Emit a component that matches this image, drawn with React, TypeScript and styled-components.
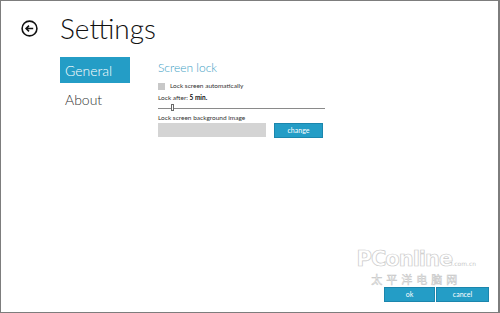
import * as React from "react";
import styled, { createGlobalStyle } from "styled-components";

const GlobalStyle = createGlobalStyle`
  html, body {
    margin: 0;
    padding: 0;
    background: #ffffff;
  }
  * {
    box-sizing: border-box;
  }
`;

const BLUE = "#249dc6";
const FONT = `Lato, "Open Sans", "Noto Sans", sans-serif`;

const App: React.FC = () => {
  const [auto, setAuto] = React.useState(false);
  const [minutes] = React.useState(5);

  return (
    <>
      <GlobalStyle />
      <Frame>
        <Header>
          <BackButton aria-label="Back">
            <svg width="17" height="17" viewBox="0 0 17 17" fill="none">
              <circle cx="8.5" cy="8.5" r="7.4" stroke="#111" strokeWidth="1.6" />
              <path d="M12.2 8.5H5.2M8 5.6L5.1 8.5L8 11.4" stroke="#111" strokeWidth="1.6" />
            </svg>
          </BackButton>
          <Title>Settings</Title>
        </Header>

        <Body>
          <Nav>
            <NavItem $active>General</NavItem>
            <NavItem>About</NavItem>
          </Nav>

          <Content>
            <SectionTitle>Screen lock</SectionTitle>
            <CheckRow onClick={() => setAuto(!auto)}>
              <CheckBox $checked={auto} />
              <SmallText>Lock screen automatically</SmallText>
            </CheckRow>
            <SmallText>
              Lock after: <strong>{minutes} min.</strong>
            </SmallText>
            <Slider>
              <Track />
              <Thumb style={{ left: `${minutes * 2.6}px` }} />
            </Slider>
            <SmallText>Lock screen background image</SmallText>
            <ImageRow>
              <ImageField />
              <Button $width={49}>change</Button>
            </ImageRow>
          </Content>
        </Body>

        <Footer>
          <Button $width={51}>ok</Button>
          <Button $width={53}>cancel</Button>
        </Footer>

        <Watermark aria-hidden>
          <WatermarkLogo>
            PConline<small>.com.cn</small>
          </WatermarkLogo>
          <WatermarkCn>太平洋电脑网</WatermarkCn>
        </Watermark>
      </Frame>
    </>
  );
};

const Frame = styled.div`
  position: relative;
  width: 500px;
  height: 313px;
  border: 1px solid #7d7d7d;
  border-right-width: 2px;
  background: #ffffff;
  display: flex;
  flex-direction: column;
  font-family: ${FONT};
  color: #333;
  overflow: hidden;
`;

const Header = styled.div`
  display: flex;
  align-items: center;
  gap: 22px;
  padding: 8px 0 0 20px;
  height: 46px;
`;

const BackButton = styled.button`
  display: flex;
  padding: 0;
  border: none;
  background: none;
  cursor: pointer;
`;

const Title = styled.h1`
  margin: 0;
  font-size: 28px;
  font-weight: 300;
  color: #111;
  line-height: 1;
`;

const Body = styled.div`
  display: flex;
  gap: 28px;
  padding: 10px 0 0 59px;
`;

const Nav = styled.nav`
  width: 70px;
  display: flex;
  flex-direction: column;
`;

const NavItem = styled.div<{ $active?: boolean }>`
  height: 26px;
  margin-bottom: 3px;
  padding-left: 5px;
  display: flex;
  align-items: center;
  font-size: 14px;
  font-weight: 300;
  background: ${(p) => (p.$active ? BLUE : "transparent")};
  color: ${(p) => (p.$active ? "#fff" : "#333")};
`;

const Content = styled.section`
  display: flex;
  flex-direction: column;
  width: 167px;
  padding-top: 4px;
`;

const SectionTitle = styled.h2`
  margin: 0 0 6px;
  font-size: 12px;
  font-weight: 300;
  color: #3c9ec4;
  line-height: 14px;
`;

const CheckRow = styled.label`
  display: flex;
  align-items: center;
  gap: 5px;
  margin-bottom: 2px;
  cursor: pointer;
`;

const CheckBox = styled.span<{ $checked: boolean }>`
  width: 7px;
  height: 7px;
  background: ${(p) => (p.$checked ? BLUE : "#c8c8c8")};
`;

const SmallText = styled.span`
  font-size: 6.5px;
  line-height: 10px;
  color: #333;
  white-space: nowrap;

  strong {
    font-weight: 700;
    color: #111;
  }
`;

const Slider = styled.div`
  position: relative;
  height: 10px;
`;

const Track = styled.div`
  position: absolute;
  left: 0;
  right: 0;
  top: 5px;
  height: 1px;
  background: #8a8a8a;
`;

const Thumb = styled.div`
  position: absolute;
  top: 1px;
  width: 3px;
  height: 7px;
  background: #fff;
  border: 1px solid #6a6a6a;
`;

const ImageRow = styled.div`
  display: flex;
  gap: 8px;
`;

const ImageField = styled.div`
  width: 108px;
  height: 14px;
  background: #d4d4d4;
`;

const Button = styled.button<{ $width: number }>`
  width: ${(p) => p.$width}px;
  height: 15px;
  padding: 0;
  border: 1px solid #1b86ad;
  background: ${BLUE};
  color: #fff;
  font-family: ${FONT};
  font-size: 7px;
  line-height: 1;
  cursor: pointer;
`;

const Footer = styled.div`
  margin-top: auto;
  display: flex;
  justify-content: flex-end;
  gap: 1px;
  padding: 0 9px 10px 0;
`;

const Watermark = styled.div`
  position: absolute;
  right: 22px;
  bottom: 27px;
  display: flex;
  flex-direction: column;
  align-items: center;
  pointer-events: none;
`;

const WatermarkLogo = styled.div`
  font-family: "DejaVu Sans", sans-serif;
  font-size: 21px;
  font-weight: 700;
  color: #fff;
  -webkit-text-stroke: 0.7px #c9c9c9;
  letter-spacing: -1px;
  line-height: 21px;

  small {
    font-size: 6px;
    font-weight: 400;
    letter-spacing: 0;
    -webkit-text-stroke: 0;
    color: #c9c9c9;
  }
`;

const WatermarkCn = styled.div`
  font-family: "Noto Sans CJK SC", sans-serif;
  font-size: 11px;
  letter-spacing: 4px;
  color: #fff;
  -webkit-text-stroke: 0.5px #c4c4c4;
  line-height: 11px;
`;

export default App;
